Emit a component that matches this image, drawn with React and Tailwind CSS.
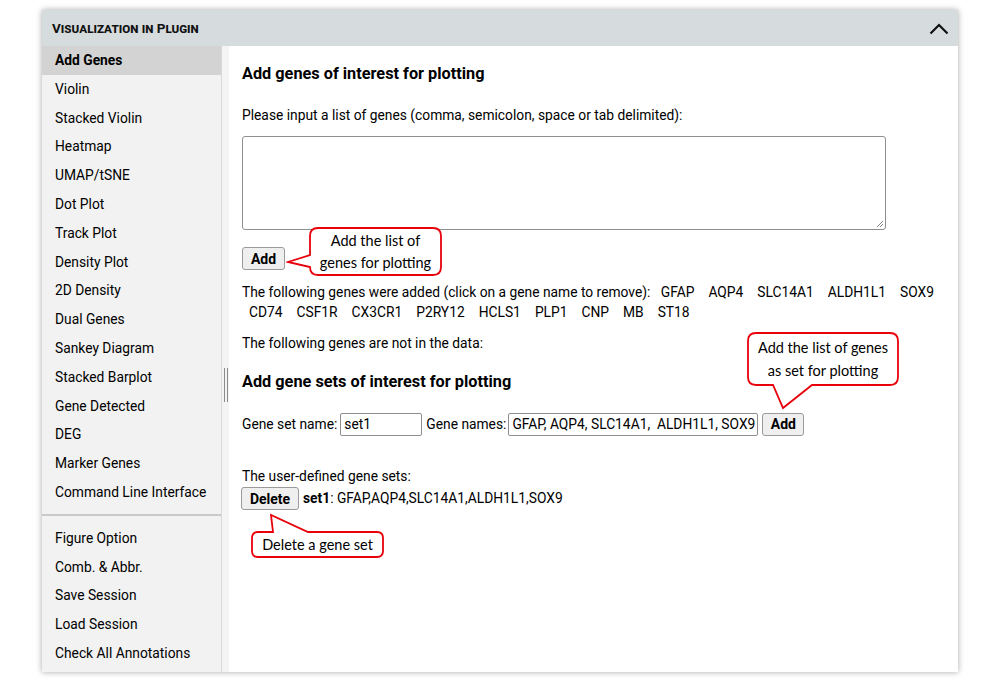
import React from "react";

const topItems = [
  "Add Genes","Violin","Stacked Violin","Heatmap","UMAP/tSNE","Dot Plot","Track Plot","Density Plot",
  "2D Density","Dual Genes","Sankey Diagram","Stacked Barplot","Gene Detected","DEG","Marker Genes","Command Line Interface",
];
const bottomItems = ["Figure Option","Comb. & Abbr.","Save Session","Load Session","Check All Annotations"];
const genes = ["GFAP","AQP4","SLC14A1","ALDH1L1","SOX9","CD74","CSF1R","CX3CR1","P2RY12","HCLS1","PLP1","CNP","MB","ST18"];

const callFont = { fontFamily: "Lato, 'Open Sans', sans-serif" };

export default function App() {
  return (
    <div className="relative w-[981px] h-[690px] bg-white text-black" style={{ fontFamily: "Roboto, 'Liberation Sans', sans-serif" }}>
      <div className="absolute left-[42px] top-[10px] w-[916px] h-[662px] flex flex-col shadow-[0_0_6px_rgba(0,0,0,0.35)] bg-white">
        <div className="h-[36px] bg-[#d6dbdd] flex items-center justify-between pl-[10px] pr-[9px] shrink-0">
          <span className="text-[13.5px] font-bold [font-variant:small-caps] text-[#111]">Visualization in Plugin</span>
          <svg width="20" height="13" viewBox="0 0 20 13"><polyline points="1.5,11.5 10,3 18.5,11.5" fill="none" stroke="#111" strokeWidth="2.2" /></svg>
        </div>
        <div className="flex flex-1 min-h-0">
          <div className="w-[180px] bg-[#f2f2f2] border-r border-[#d8d8d8] flex flex-col text-[13.8px]">
            {topItems.map((t, i) => (
              <div key={t} className={`h-[28.8px] flex items-center pl-[13px] ${i === 0 ? "bg-[#d3d3d3] font-bold" : ""}`}>{t}</div>
            ))}
            <div className="mt-[7px] h-[2px] bg-[#c9c9c9]" />
            <div className="pt-[8px]">
              {bottomItems.map((t) => (
                <div key={t} className="h-[28.8px] flex items-center pl-[13px]">{t}</div>
              ))}
            </div>
          </div>
          <div className="relative w-[7px] bg-[#f4f4f4]">
            <div className="absolute left-[2px] top-[322px] h-[34px] w-[1px] bg-[#8a8a8a]" />
            <div className="absolute left-[5px] top-[322px] h-[34px] w-[1px] bg-[#8a8a8a]" />
          </div>
          <div className="flex-1 bg-white pl-[13px] text-[13.8px]">
            <div className="mt-[16px] h-[24px] leading-[24px] text-[16.3px] font-bold">Add genes of interest for plotting</div>
            <div className="mt-[19px] leading-[20px]">Please input a list of genes (comma, semicolon, space or tab delimited):</div>
            <div className="mt-[11px] w-[644px] h-[94px] border border-[#8f8f8f] rounded-[3px] relative">
              <svg className="absolute right-[1px] bottom-[1px]" width="9" height="9" viewBox="0 0 9 9"><line x1="8" y1="2" x2="2" y2="8" stroke="#888" /><line x1="8" y1="5" x2="5" y2="8" stroke="#888" /></svg>
            </div>
            <button className="mt-[17px] block w-[43px] h-[23px] border border-[#9a9a9a] rounded-[3px] bg-[#efefef] font-bold text-[14px] leading-none">Add</button>
            <div className="mt-[12px] leading-[20px] w-[700px]">
              The following genes were added (click on a gene name to remove):{" "}
              {genes.map((g) => (
                <span key={g} className="inline-block px-[7px]">{g}</span>
              ))}
            </div>
            <div className="mt-[11px] leading-[20px]">The following genes are not in the data:</div>
            <div className="mt-[17px] h-[24px] leading-[24px] text-[16.3px] font-bold">Add gene sets of interest for plotting</div>
            <div className="mt-[19px] flex items-center h-[22px]">
              <span>Gene set name:</span>
              <div className="ml-[3px] w-[82px] h-[23px] border border-[#8f8f8f] rounded-[2px] flex items-center px-[3px]">set1</div>
              <span className="ml-[4px]">Gene names:</span>
              <div className="ml-[2px] w-[250px] h-[23px] border border-[#8f8f8f] rounded-[2px] flex items-center px-[3px] whitespace-pre overflow-hidden">GFAP, AQP4, SLC14A1,  ALDH1L1, SOX9</div>
              <button className="ml-[4px] w-[42px] h-[23px] border border-[#9a9a9a] rounded-[3px] bg-[#efefef] font-bold text-[14px] leading-none">Add</button>
            </div>
            <div className="mt-[31px] leading-[20px]">The user-defined gene sets:</div>
            <div className="mt-[1px] flex items-center h-[23px]">
              <button className="w-[58px] h-[23px] border border-[#9a9a9a] rounded-[3px] bg-[#efefef] font-bold text-[14px] leading-none -ml-[1px]">Delete</button>
              <span className="ml-[4px]"><b>set1</b>: GFAP,AQP4,SLC14A1,ALDH1L1,SOX9</span>
            </div>
          </div>
        </div>
      </div>

      {/* Callout 1 */}
      <div className="absolute left-[286px] top-[226px] w-[158px] h-[52px]">
        <svg className="absolute inset-0" width="158" height="52" viewBox="0 0 158 52">
          <path d="M32,2 H147 Q155,2 155,10 V41 Q155,49 147,49 H32 Q24,49 24,41 L2,36 L24,29 V10 Q24,2 32,2 Z" fill="white" stroke="#e8000b" strokeWidth="1.8" />
        </svg>
        <div className="absolute left-[24px] top-[4px] w-[131px] text-center text-[14.5px] leading-[22px]" style={callFont}>
          Add the list of<br />genes for plotting
        </div>
      </div>

      {/* Callout 2 */}
      <div className="absolute left-[746px] top-[331px] w-[155px] h-[80px]">
        <svg className="absolute inset-0" width="155" height="80" viewBox="0 0 155 80">
          <path d="M10,2 H144 Q152,2 152,10 V46 Q152,54 144,54 H66 L37,77 L27,54 H10 Q2,54 2,46 V10 Q2,2 10,2 Z" fill="white" stroke="#e8000b" strokeWidth="1.8" />
        </svg>
        <div className="absolute left-[2px] top-[5px] w-[150px] text-center text-[14.5px] leading-[23px]" style={callFont}>
          Add the list of genes<br />as set for plotting
        </div>
      </div>

      {/* Callout 3 */}
      <div className="absolute left-[250px] top-[513px] w-[136px] h-[47px]">
        <svg className="absolute inset-0" width="136" height="47" viewBox="0 0 136 47">
          <path d="M8,19 H23 L21,2 L58,19 H127 Q133,19 133,25 V38 Q133,44 127,44 H8 Q2,44 2,38 V25 Q2,19 8,19 Z" fill="white" stroke="#e8000b" strokeWidth="1.8" />
        </svg>
        <div className="absolute left-[2px] top-[20px] w-[131px] text-center text-[14.5px] leading-[23px]" style={callFont}>
          Delete a gene set
        </div>
      </div>
    </div>
  );
}
